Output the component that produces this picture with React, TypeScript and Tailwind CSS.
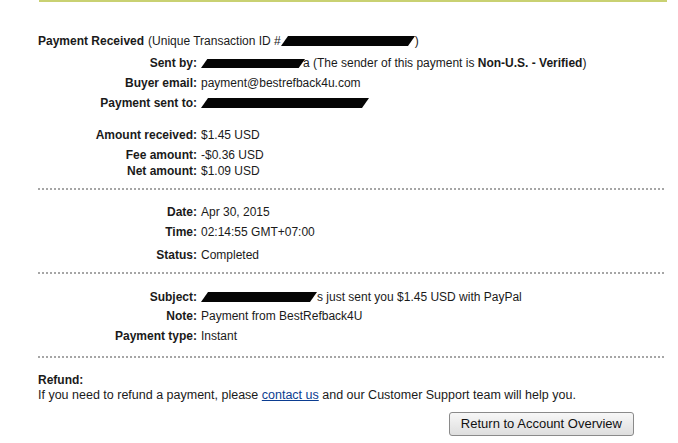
import React from 'react'

const font = "font-['Liberation_Sans',Arial,sans-serif]"

// black marker strokes that hide private data
function Redact({ w, h = 10, className = '' }: { w: number; h?: number; className?: string }) {
  return (
    <svg width={w} height={h} viewBox={`0 0 ${w} ${h}`} className={`inline-block align-middle ${className}`}>
      <polygon points={`${h * 0.7},0 ${w},0 ${w - h * 0.7},${h} 0,${h}`} fill="#050505" />
    </svg>
  )
}

function Row({ label, children, className = '' }: { label: string; children: React.ReactNode; className?: string }) {
  return (
    <div className={`flex items-center ${className}`}>
      <div className="w-[159px] shrink-0 text-right font-bold">{label}</div>
      <div className="pl-[4px] flex items-center whitespace-nowrap">{children}</div>
    </div>
  )
}

function Dotted({ className = '' }: { className?: string }) {
  return (
    <div
      className={`h-[2px] w-[628px] bg-[linear-gradient(to_right,#a6a6a6_2px,transparent_2px)] bg-[length:4px_2px] ${className}`}
    />
  )
}

export default function App() {
  return (
    <div className={`w-[678px] h-[443px] bg-white text-[12px] leading-[14px] text-[#1a1a1a] overflow-hidden ${font}`}>
      <div className="ml-[39px] w-[628px] h-[2px] bg-[#c9d172]" />

      <div className="pl-[38px]">
        <div className="mt-[32px] flex items-center whitespace-nowrap">
          <span className="font-bold">Payment Received</span>
          <span className="ml-[4px]">(Unique Transaction ID #</span>
          <Redact w={134} h={10} />
          <span>)</span>
        </div>

        <Row label="Sent by:" className="mt-[8px]">
          <Redact w={104} h={9} />
          <span className="ml-[-2px]">a (The sender of this payment is <b>Non-U.S. - Verified</b>)</span>
        </Row>
        <Row label="Buyer email:" className="mt-[6px]">
          payment@bestrefback4u.com
        </Row>
        <Row label="Payment sent to:" className="mt-[6px]">
          <Redact w={168} h={10} />
        </Row>

        <Row label="Amount received:" className="mt-[18px]">$1.45 USD</Row>
        <Row label="Fee amount:" className="mt-[6px]">-$0.36 USD</Row>
        <Row label="Net amount:" className="mt-[2px]">$1.09 USD</Row>

        <Dotted className="mt-[10px]" />

        <Row label="Date:" className="mt-[15px]">Apr 30, 2015</Row>
        <Row label="Time:" className="mt-[6px]">02:14:55 GMT+07:00</Row>
        <Row label="Status:" className="mt-[9px]">Completed</Row>

        <Dotted className="mt-[10px]" />

        <Row label="Subject:" className="mt-[16px]">
          <Redact w={116} h={10} />
          <span>s just sent you $1.45 USD with PayPal</span>
        </Row>
        <Row label="Note:" className="mt-[5px]">Payment from BestRefback4U</Row>
        <Row label="Payment type:" className="mt-[6px]">Instant</Row>

        <Dotted className="mt-[13px]" />

        <div className="mt-[15px] font-bold">Refund:</div>
        <div className="mt-[1px] whitespace-nowrap text-[12.5px]">
          If you need to refund a payment, please{' '}
          <a href="#" className="text-[#0b3d91] underline">contact us</a>{' '}
          and our Customer Support team will help you.
        </div>

        <div className="flex justify-end w-[596px] mt-[10px]">
          <button className="h-[24px] px-[11px] text-[13px] text-[#111] border border-[#8a8a8a] rounded-[3px] bg-[linear-gradient(to_bottom,#f7f7f7,#dedede)]">
            Return to Account Overview
          </button>
        </div>
      </div>
    </div>
  )
}
